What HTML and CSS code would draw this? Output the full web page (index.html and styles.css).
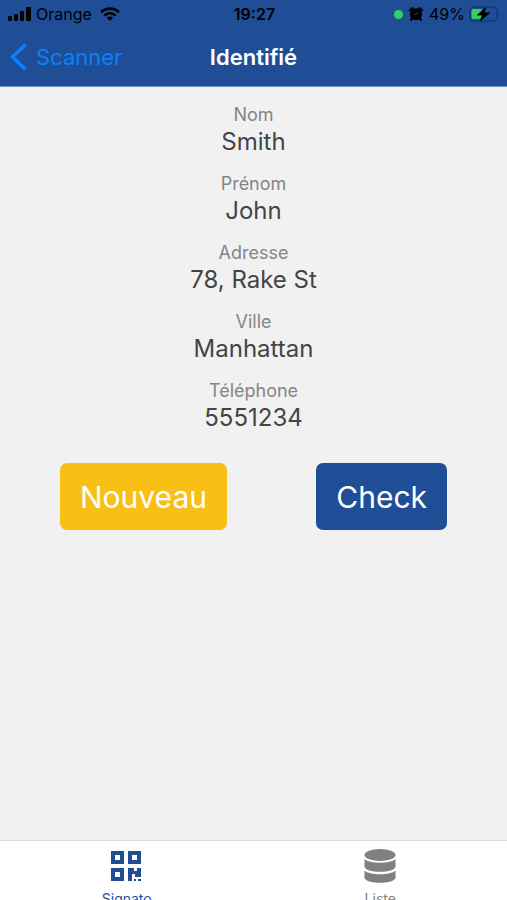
FILE: index.html
```html
<!DOCTYPE html>
<html lang="fr">
<head>
<meta charset="utf-8">
<meta name="viewport" content="width=device-width, initial-scale=1">
<title>Identifié</title>
<link rel="stylesheet" href="styles.css">
</head>
<body>
<header class="top">
  <div class="status">
    <div class="status-left">
      <svg width="24" height="14" viewBox="0 0 24 14"><rect x="0" y="9" width="4" height="5" rx="1"/><rect x="6" y="7" width="4" height="7" rx="1"/><rect x="12" y="4" width="4" height="10" rx="1"/><rect x="18" y="0" width="5" height="14" rx="1"/></svg>
      <span class="carrier">Orange</span>
      <svg width="20" height="14" viewBox="0 0 20 14"><g fill="none" stroke="#000" stroke-width="2.6"><path d="M1 5.2C6 .4 14 .4 19 5.2"/><path d="M4.3 8.6c3.3-3.1 8.1-3.1 11.4 0"/></g><path d="M10 14 6.7 10.8c1.9-1.6 4.7-1.6 6.6 0z"/></svg>
    </div>
    <time class="clock">19:27</time>
    <div class="status-right">
      <span class="dot"></span>
      <svg width="14" height="14" viewBox="0 0 14 14"><circle cx="7" cy="7.200" r="6"/><path d="M1.200 3.400 3.600 1.200M12.800 3.400 10.400 1.200M3 11.500l-1 1.200M11 11.500l1 1.200" stroke="#000" stroke-width="2.400" stroke-linecap="round"/><path d="M7.200 7.600 9 5M7.200 7.600 5 7" stroke="#1f4e96" stroke-width=".8" fill="none"/></svg>
      <span class="percent">49%</span>
      <svg class="battery" width="32" height="16" viewBox="0 0 32 16"><rect x="1" y="1" width="27" height="14" rx="4" fill="none" stroke="#173a72" stroke-width="1.500"/><path d="M29.500 5.500q2 2.500 0 5z" fill="#173a72"/><rect x="2.500" y="3" width="11" height="10" rx="2" fill="#35cf5c"/><path d="M16.500 1.500 8.500 9h5L11.500 14.500 20.500 7h-5.300z" stroke="#000"/></svg>
    </div>
  </div>
  <nav class="bar">
    <a class="back" href="#scanner"><svg width="18" height="28" viewBox="0 0 18 28"><path d="M15.500 1.500 2.500 14l13 12.500" fill="none" stroke="#0a80ff" stroke-width="3.600"/></svg>Scanner</a>
    <h1 class="title">Identifié</h1>
  </nav>
</header>
<main class="content">
  <dl class="fields">
    <div class="field"><dt>Nom</dt><dd>Smith</dd></div>
    <div class="field"><dt>Prénom</dt><dd>John</dd></div>
    <div class="field"><dt>Adresse</dt><dd>78, Rake St</dd></div>
    <div class="field"><dt>Ville</dt><dd>Manhattan</dd></div>
    <div class="field"><dt>Téléphone</dt><dd>5551234</dd></div>
  </dl>
  <div class="actions">
    <button class="btn btn-new" type="button">Nouveau</button>
    <button class="btn btn-check" type="button">Check</button>
  </div>
</main>
<nav class="tabs">
  <a class="tab tab-active" href="#signato">
    <svg width="32" height="32" viewBox="0 0 32 32" fill="currentColor"><path fill-rule="evenodd" d="M0 1h13v13H0zM4 5v5h5V5zM17 1h13v13H17zM21 5v5h5V5zM0 18h13v13H0zM4 22v5h5v-5z"/><path d="M17 18h6v3h3v-3h4v9h-6v-3h-3v7h-4zM23 29h2v2h-2zM27 29h3v2h-3z"/></svg>
    <span>Signato</span>
  </a>
  <a class="tab" href="#liste">
    <svg width="32" height="36" viewBox="0 0 32 36" fill="currentColor"><ellipse cx="16" cy="7" rx="15.500" ry="6"/><path d="M.5 11c5 5 26 5 31 0V18.500c0 7-31 7-31 0zM.5 22.500c5 5 26 5 31 0V29.500c0 7-31 7-31 0z"/></svg>
    <span>Liste</span>
  </a>
</nav>
</body>
</html>
```
FILE: styles.css
```css
* {
  box-sizing: border-box;
}

body {
  margin: 0;
  height: 100vh;
  overflow: hidden;
  display: flex;
  flex-direction: column;
  background: #f1f1f1;
  font-family: Inter, "Liberation Sans", sans-serif;
}

a {
  text-decoration: none;
}

.top {
  background: #1f4e96;
  border-bottom: 1px solid #7090c0;
}

.status,
.bar {
  display: grid;
  grid-template-columns: 1fr auto 1fr;
  align-items: center;
}

.status {
  height: 28px;
  padding: 0 6px 0 8px;
  font-size: 16px;
  color: #000;
}

.status-left,
.status-right {
  display: flex;
  align-items: center;
}

.carrier {
  margin: 0 8px 0 4px;
}

.clock {
  font-weight: 600;
}

.status-right {
  justify-content: flex-end;
  gap: 6px;
}

.dot {
  width: 9px;
  height: 9px;
  border-radius: 50%;
  background: #35cf5c;
}

.battery {
  margin-left: -2px;
}

.bar {
  height: 58px;
  padding: 0 10px;
}

.back {
  display: flex;
  align-items: center;
  gap: 8px;
  font-size: 22px;
  color: #0a80ff;
}

.title {
  margin: 0;
  font-size: 22px;
  font-weight: 600;
  color: #fff;
}

.content {
  flex: 1;
  padding-top: 16px;
}

.fields {
  margin: 0;
  text-align: center;
}

.field {
  padding-bottom: 16px;
}

dt {
  font-size: 18px;
  line-height: 24px;
  color: #858585;
}

dd {
  margin: 0;
  font-size: 24px;
  line-height: 29px;
  color: #444;
}

.actions {
  display: flex;
  justify-content: space-between;
  margin-top: 15px;
  padding: 0 60px;
}

.btn {
  height: 67px;
  padding: 0 20px;
  border: 0;
  border-radius: 7px;
  font-family: inherit;
  font-size: 30px;
  color: #fff;
}

.btn-new {
  background: #f8c015;
}

.btn-check {
  background: #1f4e96;
}

.tabs {
  display: flex;
  flex: none;
  height: 60px;
  border-top: 1px solid #dcdcdc;
  background: #fff;
}

.tab {
  flex: 1;
  display: flex;
  flex-direction: column;
  align-items: center;
  padding-top: 7px;
  font-size: 14px;
  line-height: 16px;
  color: #808080;
}

.tab svg {
  flex: none;
  height: 36px;
  margin-bottom: 7px;
}

.tab-active {
  color: #1f4e96;
}
```
